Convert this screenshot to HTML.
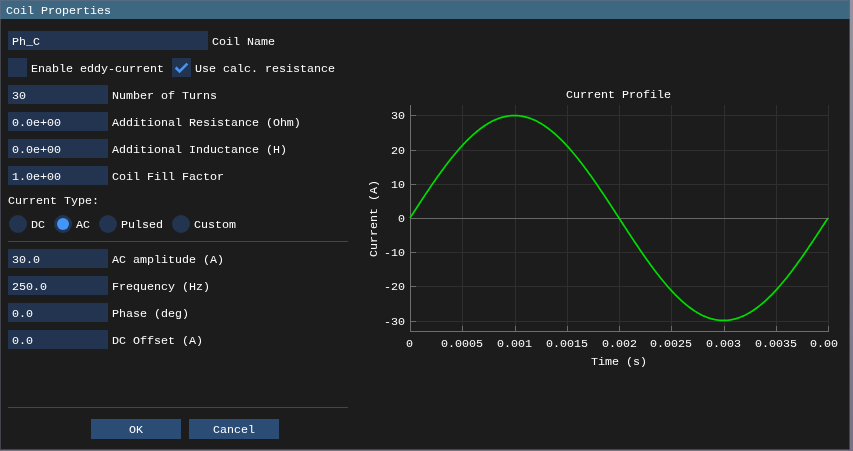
<!DOCTYPE html><html><head><meta charset="utf-8"><style>
html,body{margin:0;padding:0;}
body{width:853px;height:451px;overflow:hidden;position:relative;background:linear-gradient(180deg,#96949f 0%,#8a8496 50%,#7a7187 100%);}
body>div,body>svg{position:absolute;}
.t{position:absolute;will-change:transform;font-family:"Liberation Mono",monospace;font-size:11.6667px;line-height:13px;color:#ffffff;white-space:pre;}
#win{left:0;top:0;width:850px;height:450px;background:#1c1c1c;}
#bd{left:0;top:0;width:848px;height:448px;border:1px solid rgba(110,110,128,0.5);}
</style></head><body>
<div id="win"></div>
<div style="left:0px;top:0px;width:850px;height:19px;background:#3e6782;"></div>
<div class="t" style="left:6px;top:5px;">Coil Properties</div>
<div style="left:8px;top:31px;width:200px;height:19px;background:#233450;"></div>
<div class="t" style="left:12px;top:36px;">Ph_C</div>
<div class="t" style="left:212px;top:36px;">Coil Name</div>
<div style="left:8px;top:58px;width:19px;height:19px;background:#233450;"></div>
<div class="t" style="left:31px;top:63px;">Enable eddy-current</div>
<div style="left:172px;top:58px;width:19px;height:19px;background:#233450;"></div>
<svg style="position:absolute;left:172px;top:58px" width="19" height="19"><polyline points="3.65,9.5 7.55,13.4 15.35,5.6" fill="none" stroke="#4296fa" stroke-width="2.6"/></svg>
<div class="t" style="left:195px;top:63px;">Use calc. resistance</div>
<div style="left:8px;top:85px;width:100px;height:19px;background:#233450;"></div>
<div class="t" style="left:12px;top:90px;">30</div>
<div class="t" style="left:112px;top:90px;">Number of Turns</div>
<div style="left:8px;top:112px;width:100px;height:19px;background:#233450;"></div>
<div class="t" style="left:12px;top:117px;">0.0e+00</div>
<div class="t" style="left:112px;top:117px;">Additional Resistance (Ohm)</div>
<div style="left:8px;top:139px;width:100px;height:19px;background:#233450;"></div>
<div class="t" style="left:12px;top:144px;">0.0e+00</div>
<div class="t" style="left:112px;top:144px;">Additional Inductance (H)</div>
<div style="left:8px;top:166px;width:100px;height:19px;background:#233450;"></div>
<div class="t" style="left:12px;top:171px;">1.0e+00</div>
<div class="t" style="left:112px;top:171px;">Coil Fill Factor</div>
<div class="t" style="left:8px;top:195px;">Current Type:</div>
<svg style="position:absolute;left:0;top:214px" width="360" height="21"><circle cx="18" cy="10" r="9" fill="#233450"/><circle cx="63" cy="10" r="9" fill="#233450"/><circle cx="63" cy="10" r="6" fill="#4296fa"/><circle cx="108" cy="10" r="9" fill="#233450"/><circle cx="181" cy="10" r="9" fill="#233450"/></svg>
<div class="t" style="left:31px;top:219px;">DC</div>
<div class="t" style="left:76px;top:219px;">AC</div>
<div class="t" style="left:121px;top:219px;">Pulsed</div>
<div class="t" style="left:194px;top:219px;">Custom</div>
<div style="left:8px;top:241px;width:340px;height:1px;background:#45454e;"></div>
<div style="left:8px;top:249px;width:100px;height:19px;background:#233450;"></div>
<div class="t" style="left:12px;top:254px;">30.0</div>
<div class="t" style="left:112px;top:254px;">AC amplitude (A)</div>
<div style="left:8px;top:276px;width:100px;height:19px;background:#233450;"></div>
<div class="t" style="left:12px;top:281px;">250.0</div>
<div class="t" style="left:112px;top:281px;">Frequency (Hz)</div>
<div style="left:8px;top:303px;width:100px;height:19px;background:#233450;"></div>
<div class="t" style="left:12px;top:308px;">0.0</div>
<div class="t" style="left:112px;top:308px;">Phase (deg)</div>
<div style="left:8px;top:330px;width:100px;height:19px;background:#233450;"></div>
<div class="t" style="left:12px;top:335px;">0.0</div>
<div class="t" style="left:112px;top:335px;">DC Offset (A)</div>
<div style="left:8px;top:407px;width:340px;height:1px;background:#45454e;"></div>
<div style="left:91px;top:419px;width:90px;height:20px;background:#2b4d75;"></div>
<div style="left:189px;top:419px;width:90px;height:20px;background:#2b4d75;"></div>
<div class="t" style="left:129px;top:424px;">OK</div>
<div class="t" style="left:213px;top:424px;">Cancel</div>
<div class="t" style="left:566px;top:89px;">Current Profile</div>
<svg style="position:absolute;left:0;top:0" width="853" height="451"><defs><clipPath id="pc"><rect x="356" y="0" width="482" height="451"/></clipPath></defs><line x1="462.5" y1="105" x2="462.5" y2="331" stroke="#2f2f2f" stroke-width="1"/><line x1="515.5" y1="105" x2="515.5" y2="331" stroke="#2f2f2f" stroke-width="1"/><line x1="567.5" y1="105" x2="567.5" y2="331" stroke="#2f2f2f" stroke-width="1"/><line x1="619.5" y1="105" x2="619.5" y2="331" stroke="#2f2f2f" stroke-width="1"/><line x1="671.5" y1="105" x2="671.5" y2="331" stroke="#2f2f2f" stroke-width="1"/><line x1="724.5" y1="105" x2="724.5" y2="331" stroke="#2f2f2f" stroke-width="1"/><line x1="776.5" y1="105" x2="776.5" y2="331" stroke="#2f2f2f" stroke-width="1"/><line x1="828.5" y1="105" x2="828.5" y2="331" stroke="#2f2f2f" stroke-width="1"/><line x1="410" y1="321.5" x2="829" y2="321.5" stroke="#2f2f2f" stroke-width="1"/><line x1="410" y1="321.5" x2="416" y2="321.5" stroke="#6c6c6c" stroke-width="1"/><line x1="410" y1="286.5" x2="829" y2="286.5" stroke="#2f2f2f" stroke-width="1"/><line x1="410" y1="286.5" x2="416" y2="286.5" stroke="#6c6c6c" stroke-width="1"/><line x1="410" y1="252.5" x2="829" y2="252.5" stroke="#2f2f2f" stroke-width="1"/><line x1="410" y1="252.5" x2="416" y2="252.5" stroke="#6c6c6c" stroke-width="1"/><line x1="410" y1="218.5" x2="829" y2="218.5" stroke="#666666" stroke-width="1"/><line x1="410" y1="218.5" x2="416" y2="218.5" stroke="#6c6c6c" stroke-width="1"/><line x1="410" y1="184.5" x2="829" y2="184.5" stroke="#2f2f2f" stroke-width="1"/><line x1="410" y1="184.5" x2="416" y2="184.5" stroke="#6c6c6c" stroke-width="1"/><line x1="410" y1="150.5" x2="829" y2="150.5" stroke="#2f2f2f" stroke-width="1"/><line x1="410" y1="150.5" x2="416" y2="150.5" stroke="#6c6c6c" stroke-width="1"/><line x1="410" y1="115.5" x2="829" y2="115.5" stroke="#2f2f2f" stroke-width="1"/><line x1="410" y1="115.5" x2="416" y2="115.5" stroke="#6c6c6c" stroke-width="1"/><line x1="462.5" y1="326" x2="462.5" y2="331" stroke="#6c6c6c" stroke-width="1"/><line x1="515.5" y1="326" x2="515.5" y2="331" stroke="#6c6c6c" stroke-width="1"/><line x1="567.5" y1="326" x2="567.5" y2="331" stroke="#6c6c6c" stroke-width="1"/><line x1="619.5" y1="326" x2="619.5" y2="331" stroke="#6c6c6c" stroke-width="1"/><line x1="671.5" y1="326" x2="671.5" y2="331" stroke="#6c6c6c" stroke-width="1"/><line x1="724.5" y1="326" x2="724.5" y2="331" stroke="#6c6c6c" stroke-width="1"/><line x1="776.5" y1="326" x2="776.5" y2="331" stroke="#6c6c6c" stroke-width="1"/><line x1="828.5" y1="326" x2="828.5" y2="331" stroke="#6c6c6c" stroke-width="1"/><line x1="410.5" y1="105" x2="410.5" y2="332" stroke="#6e6e6e" stroke-width="1"/><line x1="410" y1="331.5" x2="829" y2="331.5" stroke="#6e6e6e" stroke-width="1"/><polyline points="410.00,218.00 411.05,216.39 412.09,214.78 413.13,213.17 414.18,211.57 415.23,209.96 416.27,208.36 417.31,206.76 418.36,205.16 419.40,203.56 420.45,201.97 421.50,200.39 422.54,198.80 423.58,197.22 424.63,195.65 425.68,194.08 426.72,192.52 427.76,190.97 428.81,189.42 429.86,187.88 430.90,186.34 431.94,184.81 432.99,183.30 434.04,181.79 435.08,180.29 436.12,178.79 437.17,177.31 438.21,175.84 439.26,174.38 440.31,172.93 441.35,171.49 442.39,170.06 443.44,168.64 444.49,167.24 445.53,165.85 446.57,164.47 447.62,163.10 448.67,161.75 449.71,160.41 450.75,159.09 451.80,157.78 452.85,156.49 453.89,155.21 454.94,153.94 455.98,152.70 457.02,151.46 458.07,150.25 459.12,149.05 460.16,147.87 461.20,146.70 462.25,145.56 463.30,144.43 464.34,143.32 465.38,142.22 466.43,141.15 467.48,140.10 468.52,139.06 469.56,138.04 470.61,137.05 471.65,136.07 472.70,135.12 473.75,134.18 474.79,133.27 475.84,132.37 476.88,131.50 477.93,130.65 478.97,129.82 480.01,129.01 481.06,128.22 482.11,127.46 483.15,126.72 484.19,126.00 485.24,125.30 486.28,124.63 487.33,123.98 488.38,123.35 489.42,122.74 490.46,122.16 491.51,121.61 492.56,121.07 493.60,120.56 494.64,120.08 495.69,119.62 496.74,119.18 497.78,118.77 498.82,118.38 499.87,118.02 500.92,117.68 501.96,117.36 503.00,117.08 504.05,116.81 505.10,116.57 506.14,116.36 507.19,116.17 508.23,116.00 509.27,115.87 510.32,115.75 511.37,115.66 512.41,115.60 513.46,115.56 514.50,115.55 515.54,115.56 516.59,115.60 517.63,115.66 518.68,115.75 519.73,115.87 520.77,116.00 521.82,116.17 522.86,116.36 523.90,116.57 524.95,116.81 526.00,117.08 527.04,117.36 528.09,117.68 529.13,118.02 530.17,118.38 531.22,118.77 532.26,119.18 533.31,119.62 534.36,120.08 535.40,120.56 536.44,121.07 537.49,121.61 538.53,122.16 539.58,122.74 540.62,123.35 541.67,123.98 542.72,124.63 543.76,125.30 544.81,126.00 545.85,126.72 546.89,127.46 547.94,128.22 548.99,129.01 550.03,129.82 551.08,130.65 552.12,131.50 553.16,132.37 554.21,133.27 555.25,134.18 556.30,135.12 557.35,136.07 558.39,137.05 559.43,138.04 560.48,139.06 561.52,140.10 562.57,141.15 563.62,142.22 564.66,143.32 565.71,144.43 566.75,145.56 567.80,146.70 568.84,147.87 569.88,149.05 570.93,150.25 571.98,151.46 573.02,152.70 574.07,153.94 575.11,155.21 576.15,156.49 577.20,157.78 578.25,159.09 579.29,160.41 580.34,161.75 581.38,163.10 582.42,164.47 583.47,165.85 584.51,167.24 585.56,168.64 586.61,170.06 587.65,171.49 588.70,172.93 589.74,174.38 590.79,175.84 591.83,177.31 592.88,178.79 593.92,180.29 594.96,181.79 596.01,183.30 597.06,184.81 598.10,186.34 599.14,187.88 600.19,189.42 601.24,190.97 602.28,192.52 603.33,194.08 604.37,195.65 605.41,197.22 606.46,198.80 607.50,200.39 608.55,201.97 609.60,203.56 610.64,205.16 611.68,206.76 612.73,208.36 613.77,209.96 614.82,211.57 615.87,213.17 616.91,214.78 617.95,216.39 619.00,218.00 620.05,219.61 621.09,221.22 622.13,222.83 623.18,224.43 624.23,226.04 625.27,227.64 626.32,229.24 627.36,230.84 628.40,232.44 629.45,234.03 630.50,235.61 631.54,237.20 632.59,238.78 633.63,240.35 634.67,241.92 635.72,243.48 636.76,245.03 637.81,246.58 638.86,248.12 639.90,249.66 640.94,251.19 641.99,252.70 643.04,254.21 644.08,255.71 645.12,257.21 646.17,258.69 647.21,260.16 648.26,261.62 649.30,263.07 650.35,264.51 651.39,265.94 652.44,267.36 653.49,268.76 654.53,270.15 655.58,271.53 656.62,272.90 657.66,274.25 658.71,275.59 659.75,276.91 660.80,278.22 661.85,279.51 662.89,280.79 663.93,282.06 664.98,283.30 666.02,284.54 667.07,285.75 668.12,286.95 669.16,288.13 670.21,289.30 671.25,290.44 672.30,291.57 673.34,292.68 674.38,293.78 675.43,294.85 676.48,295.90 677.52,296.94 678.57,297.96 679.61,298.95 680.65,299.93 681.70,300.88 682.75,301.82 683.79,302.73 684.84,303.63 685.88,304.50 686.92,305.35 687.97,306.18 689.01,306.99 690.06,307.78 691.11,308.54 692.15,309.28 693.20,310.00 694.24,310.70 695.29,311.37 696.33,312.02 697.38,312.65 698.42,313.26 699.47,313.84 700.51,314.39 701.56,314.93 702.60,315.44 703.64,315.92 704.69,316.38 705.74,316.82 706.78,317.23 707.83,317.62 708.87,317.98 709.91,318.32 710.96,318.64 712.00,318.92 713.05,319.19 714.10,319.43 715.14,319.64 716.18,319.83 717.23,320.00 718.27,320.13 719.32,320.25 720.37,320.34 721.41,320.40 722.45,320.44 723.50,320.45 724.55,320.44 725.59,320.40 726.63,320.34 727.68,320.25 728.72,320.13 729.77,320.00 730.81,319.83 731.86,319.64 732.90,319.43 733.95,319.19 734.99,318.92 736.04,318.64 737.09,318.32 738.13,317.98 739.17,317.62 740.22,317.23 741.27,316.82 742.31,316.38 743.36,315.92 744.40,315.44 745.44,314.93 746.49,314.39 747.54,313.84 748.58,313.26 749.62,312.65 750.67,312.02 751.72,311.37 752.76,310.70 753.80,310.00 754.85,309.28 755.89,308.54 756.94,307.78 757.98,306.99 759.03,306.18 760.08,305.35 761.12,304.50 762.16,303.63 763.21,302.73 764.26,301.82 765.30,300.88 766.35,299.93 767.39,298.95 768.44,297.96 769.48,296.94 770.53,295.90 771.57,294.85 772.62,293.78 773.66,292.68 774.71,291.57 775.75,290.44 776.80,289.30 777.84,288.13 778.88,286.95 779.93,285.75 780.97,284.54 782.02,283.30 783.07,282.06 784.11,280.79 785.15,279.51 786.20,278.22 787.25,276.91 788.29,275.59 789.34,274.25 790.38,272.90 791.42,271.53 792.47,270.15 793.51,268.76 794.56,267.36 795.61,265.94 796.65,264.51 797.69,263.07 798.74,261.62 799.78,260.16 800.83,258.69 801.88,257.21 802.92,255.71 803.96,254.21 805.01,252.70 806.06,251.19 807.10,249.66 808.14,248.12 809.19,246.58 810.24,245.03 811.28,243.48 812.33,241.92 813.37,240.35 814.41,238.78 815.46,237.20 816.50,235.61 817.55,234.03 818.60,232.44 819.64,230.84 820.68,229.24 821.73,227.64 822.78,226.04 823.82,224.43 824.87,222.83 825.91,221.22 826.96,219.61 828.00,218.00" fill="none" stroke="#00dc00" stroke-width="1.7"/></svg>
<div class="t" style="left:406px;top:338px;">0</div>
<div class="t" style="left:441px;top:338px;">0.0005</div>
<div class="t" style="left:497px;top:338px;">0.001</div>
<div class="t" style="left:546px;top:338px;">0.0015</div>
<div class="t" style="left:602px;top:338px;">0.002</div>
<div class="t" style="left:650px;top:338px;">0.0025</div>
<div class="t" style="left:706px;top:338px;">0.003</div>
<div class="t" style="left:755px;top:338px;">0.0035</div>
<div class="t" style="left:810px;top:338px;width:28px;overflow:hidden;">0.004</div>
<div class="t" style="left:384px;top:316px;">-30</div>
<div class="t" style="left:384px;top:281px;">-20</div>
<div class="t" style="left:384px;top:247px;">-10</div>
<div class="t" style="left:398px;top:213px;">0</div>
<div class="t" style="left:391px;top:179px;">10</div>
<div class="t" style="left:391px;top:145px;">20</div>
<div class="t" style="left:391px;top:110px;">30</div>
<div class="t" style="left:591px;top:356px;">Time (s)</div>
<div class="t" style="left:336.0px;top:212.0px;width:77px;height:13px;transform:rotate(-90deg);transform-origin:38.5px 6.5px;">Current (A)</div>
<div id="bd"></div>
</body></html>
